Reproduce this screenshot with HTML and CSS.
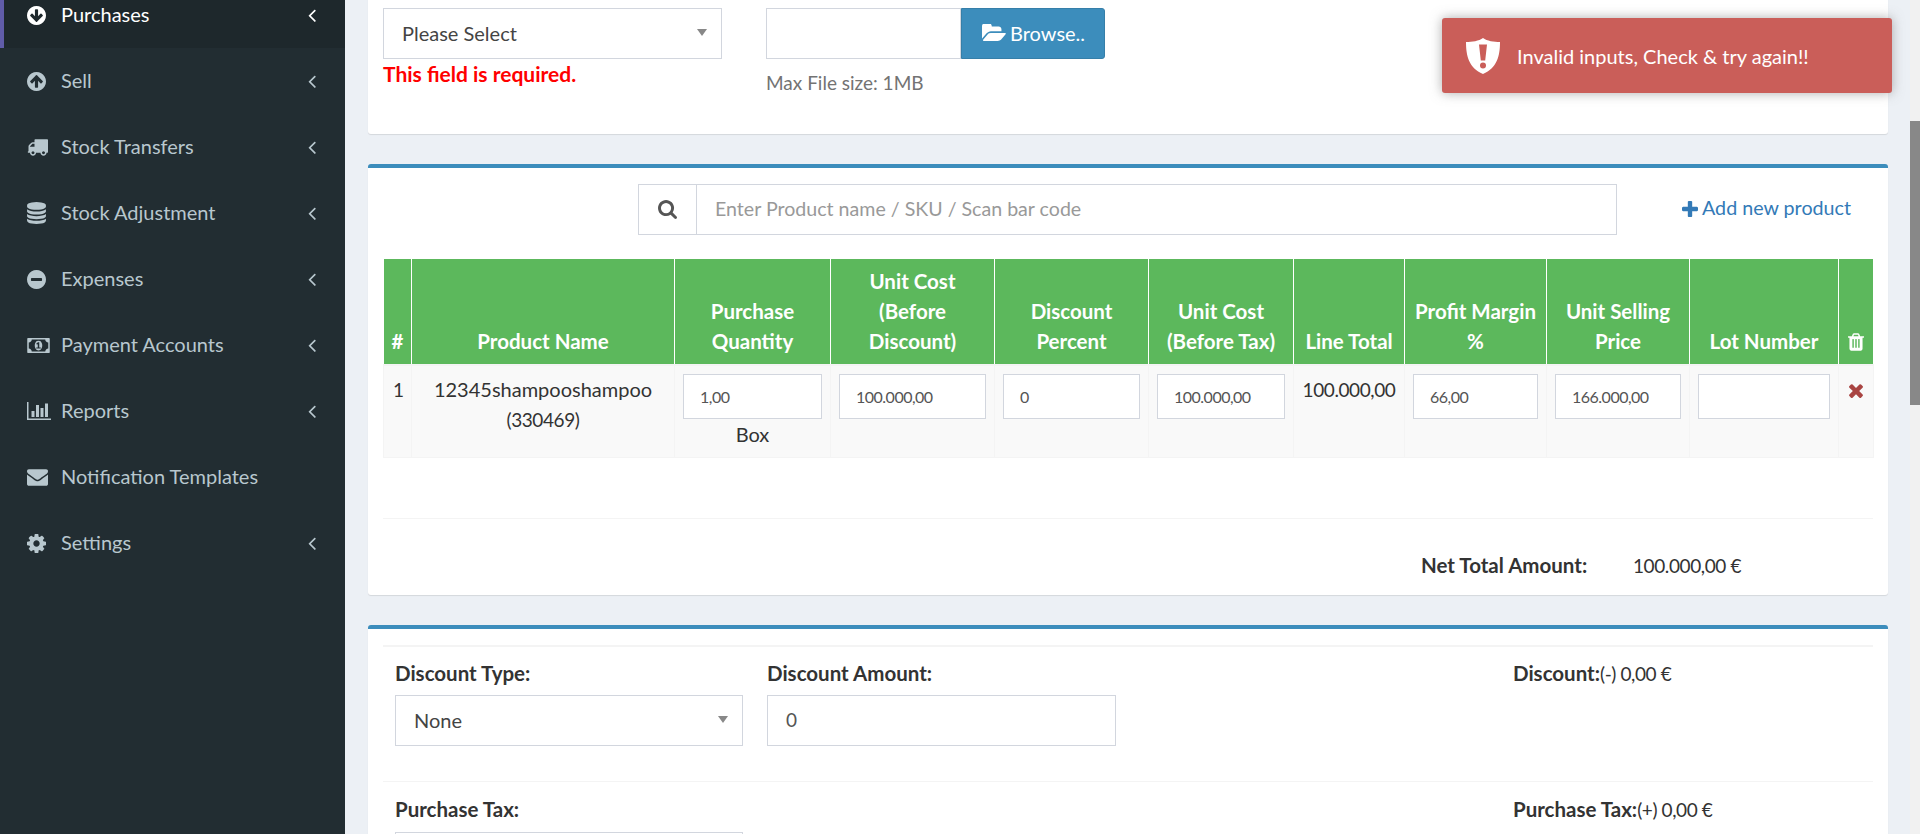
FILE: index.html
```html
<!DOCTYPE html>
<html lang="en">
<head>
  <meta charset="UTF-8" />
  <title>Add Purchase</title>
  <link rel="stylesheet" href="styles.css">
</head>
<body>
  <!-- Sidebar -->
  <aside class="sidebar">
    <ul class="menu">
      <li class="menu-item active">
        <svg class="ico ico-circle" viewBox="128 128 1536 1536"><path d="M1412 897q0-27-18-45l-91-91q-18-18-45-18t-45 18l-189 189v-502q0-26-19-45t-45-19h-128q-26 0-45 19t-19 45v502l-189-189q-19-19-45-19t-45 19l-91 91q-18 18-18 45t18 45l362 362 91 91q18 18 45 18t45-18l91-91 362-362q18-18 18-45zm252-1q0 209-103 385.500t-279.500 279.500-385.500 103-385.500-103-279.500-279.500-103-385.500 103-385.500 279.500-279.500 385.500-103 385.500 103 279.500 279.500 103 385.500z"/></svg>
        <span class="menu-label">Purchases</span>
        <svg class="chevron" viewBox="0 0 1792 1792"><path d="M1203 544q0 13-10 23l-393 393 393 393q10 10 10 23t-10 23l-50 50q-10 10-23 10t-23-10l-466-466q-10-10-10-23t10-23l466-466q10-10 23-10t23 10l50 50q10 10 10 23z"/></svg>
      </li>
      <li class="menu-item">
        <svg class="ico ico-circle" viewBox="128 128 1536 1536"><path d="M1412 895q0-27-18-45l-362-362-91-91q-18-18-45-18t-45 18l-91 91-362 362q-18 18-18 45t18 45l91 91q18 18 45 18t45-18l189-189v502q0 26 19 45t45 19h128q26 0 45-19t19-45v-502l189 189q19 19 45 19t45-19l91-91q18-18 18-45zm252 1q0 209-103 385.500t-279.500 279.500-385.500 103-385.500-103-279.500-279.500-103-385.500 103-385.500 279.500-279.500 385.500-103 385.500 103 279.500 279.500 103 385.500z"/></svg>
        <span class="menu-label">Sell</span>
        <svg class="chevron" viewBox="0 0 1792 1792"><path d="M1203 544q0 13-10 23l-393 393 393 393q10 10 10 23t-10 23l-50 50q-10 10-23 10t-23-10l-466-466q-10-10-10-23t10-23l466-466q10-10 23-10t23 10l50 50q10 10 10 23z"/></svg>
      </li>
      <li class="menu-item">
        <svg class="ico ico-truck" viewBox="0 256 1792 1408"><path d="M640 1408q0-52-38-90t-90-38-90 38-38 90 38 90 90 38 90-38 38-90zm-384-512h384v-256h-158q-13 0-22 9l-195 195q-9 9-9 22v30zm1280 512q0-52-38-90t-90-38-90 38-38 90 38 90 90 38 90-38 38-90zm256-1088v1024q0 15-4 26.500t-13.500 18.500-16.500 11.500-23.500 6-22.500 2-25.500 0-22.500-.5q0 106-75 181t-181 75-181-75-75-181h-384q0 106-75 181t-181 75-181-75-75-181h-64q-3 0-22.500.5t-25.500 0-22.500-2-23.500-6-16.500-11.500-13.500-18.500-4-26.500q0-26 19-45t45-19v-320q0-8-.5-35t0-38 2.500-34.500 6.500-37 14-30.500 22.500-30l198-198q19-19 50.500-32t58.500-13h160v-192q0-26 19-45t45-19h1024q26 0 45 19t19 45z"/></svg>
        <span class="menu-label">Stock Transfers</span>
        <svg class="chevron" viewBox="0 0 1792 1792"><path d="M1203 544q0 13-10 23l-393 393 393 393q10 10 10 23t-10 23l-50 50q-10 10-23 10t-23-10l-466-466q-10-10-10-23t10-23l466-466q10-10 23-10t23 10l50 50q10 10 10 23z"/></svg>
      </li>
      <li class="menu-item">
        <svg class="ico ico-database" viewBox="128 0 1536 1792"><path d="M896 768q237 0 443-43t325-127v170q0 69-103 128t-280 93.500-385 34.500-385-34.500-280-93.500-103-128v-170q119 84 325 127t443 43zm0 768q237 0 443-43t325-127v170q0 69-103 128t-280 93.500-385 34.500-385-34.500-280-93.500-103-128v-170q119 84 325 127t443 43zm0-384q237 0 443-43t325-127v170q0 69-103 128t-280 93.500-385 34.500-385-34.500-280-93.500-103-128v-170q119 84 325 127t443 43zm0-1152q208 0 385 34.500t280 93.500 103 128v128q0 69-103 128t-280 93.500-385 34.500-385-34.500-280-93.500-103-128v-128q0-69 103-128t280-93.500 385-34.500z"/></svg>
        <span class="menu-label">Stock Adjustment</span>
        <svg class="chevron" viewBox="0 0 1792 1792"><path d="M1203 544q0 13-10 23l-393 393 393 393q10 10 10 23t-10 23l-50 50q-10 10-23 10t-23-10l-466-466q-10-10-10-23t10-23l466-466q10-10 23-10t23 10l50 50q10 10 10 23z"/></svg>
      </li>
      <li class="menu-item">
        <svg class="ico ico-circle" viewBox="128 128 1536 1536"><path d="M1344 960v-128q0-26-19-45t-45-19h-768q-26 0-45 19t-19 45v128q0 26 19 45t45 19h768q26 0 45-19t19-45zm320-64q0 209-103 385.500t-279.500 279.500-385.500 103-385.500-103-279.500-279.500-103-385.500 103-385.500 279.500-279.500 385.500-103 385.500 103 279.500 279.500 103 385.500z"/></svg>
        <span class="menu-label">Expenses</span>
        <svg class="chevron" viewBox="0 0 1792 1792"><path d="M1203 544q0 13-10 23l-393 393 393 393q10 10 10 23t-10 23l-50 50q-10 10-23 10t-23-10l-466-466q-10-10-10-23t10-23l466-466q10-10 23-10t23 10l50 50q10 10 10 23z"/></svg>
      </li>
      <li class="menu-item">
        <svg class="ico ico-money" viewBox="0 256 1920 1280"><path d="M768 1152h384v-96h-128v-448h-114l-148 137 77 80q42-37 55-57h2v288h-128v96zm512-256q0 70-21 142t-59.500 134-101.500 101-138 39-138-39-101.500-101-59.500-134-21-142 21-142 59.500-134 101.500-101 138-39 138 39 101.500 101 59.500 134 21 142zm512 256v-512q-106 0-181-75t-75-181h-1152q0 106-75 181t-181 75v512q106 0 181 75t75 181h1152q0-106 75-181t181-75zm128-832v1152q0 26-19 45t-45 19h-1792q-26 0-45-19t-19-45v-1152q0-26 19-45t45-19h1792q26 0 45 19t19 45z"/></svg>
        <span class="menu-label">Payment Accounts</span>
        <svg class="chevron" viewBox="0 0 1792 1792"><path d="M1203 544q0 13-10 23l-393 393 393 393q10 10 10 23t-10 23l-50 50q-10 10-23 10t-23-10l-466-466q-10-10-10-23t10-23l466-466q10-10 23-10t23 10l50 50q10 10 10 23z"/></svg>
      </li>
      <li class="menu-item">
        <svg class="ico ico-chart" viewBox="0 128 2048 1536"><path d="M640 896v512h-256v-512h256zm384-512v1024h-256v-1024h256zm1024 1152v128h-2048v-1536h128v1408h1920zm-640-896v768h-256v-768h256zm384-384v1152h-256v-1152h256z"/></svg>
        <span class="menu-label">Reports</span>
        <svg class="chevron" viewBox="0 0 1792 1792"><path d="M1203 544q0 13-10 23l-393 393 393 393q10 10 10 23t-10 23l-50 50q-10 10-23 10t-23-10l-466-466q-10-10-10-23t10-23l466-466q10-10 23-10t23 10l50 50q10 10 10 23z"/></svg>
      </li>
      <li class="menu-item">
        <svg class="ico ico-truck" viewBox="0 256 1792 1408"><path d="M1792 710v794q0 66-47 113t-113 47h-1472q-66 0-113-47t-47-113v-794q44 49 101 87 362 246 497 345 57 42 92.500 65.500t94.500 48 110 24.500h2q51 0 110-24.500t94.500-48 92.500-65.500q170-123 498-345 57-39 100-87zm0-294q0 79-49 151t-122 123q-376 261-468 325-10 7-42.500 30.500t-54 38-52 32.500-57.500 27-50 9h-2q-23 0-50-9t-57.500-27-52-32.500-54-38-42.500-30.500q-91-64-262-182.500t-205-142.500q-62-42-117-115.500t-55-136.500q0-78 41.500-130t118.500-52h1472q65 0 112.500 47t47.500 113z"/></svg>
        <span class="menu-label">Notification Templates</span>
      </li>
      <li class="menu-item">
        <svg class="ico ico-circle" viewBox="128 128 1536 1536"><path d="M1152 896q0-106-75-181t-181-75-181 75-75 181 75 181 181 75 181-75 75-181zm512-109v222q0 12-8 23t-20 13l-185 28q-19 54-39 91 35 50 107 138 10 12 10 25t-9 23q-27 37-99 108t-94 71q-12 0-26-9l-138-108q-44 23-91 38-16 136-29 186-7 28-36 28h-222q-14 0-24.500-8.500t-11.500-21.500l-28-184q-49-16-90-37l-141 107q-10 9-25 9-14 0-25-11-126-114-165-168-7-10-7-23 0-12 8-23 15-21 51-66.500t54-70.500q-27-50-41-99l-183-27q-13-2-21-12.500t-8-23.500v-222q0-12 8-23t19-13l186-28q14-46 39-92-40-57-107-138-10-12-10-24 0-10 9-23 26-36 98.500-107.500t94.500-71.500q13 0 26 10l138 107q44-23 91-38 16-136 29-186 7-28 36-28h222q14 0 24.500 8.500t11.500 21.500l28 184q49 16 90 37l142-107q9-9 24-9 13 0 25 10 129 119 165 170 7 8 7 22 0 12-8 23-15 21-51 66.500t-54 70.500q26 50 41 98l183 28q13 2 21 12.500t8 23.500z"/></svg>
        <span class="menu-label">Settings</span>
        <svg class="chevron" viewBox="0 0 1792 1792"><path d="M1203 544q0 13-10 23l-393 393 393 393q10 10 10 23t-10 23l-50 50q-10 10-23 10t-23-10l-466-466q-10-10-10-23t10-23l466-466q10-10 23-10t23 10l50 50q10 10 10 23z"/></svg>
      </li>
    </ul>
  </aside>

  <main class="content">
    <!-- Supplier + document -->
    <section class="box box-plain">
      <div class="doc-row">
        <div class="doc-col">
          <div class="select"><span>Please Select</span><i class="caret"></i></div>
          <div class="error">This field is required.</div>
        </div>
        <div class="file-col">
          <div class="file-group">
            <div class="file-name"></div>
            <div class="file-btn">
              <svg class="ico-folder" viewBox="0 192 1944 1344"><path d="M1943 952q0 31-31 66l-336 396q-43 51-120.500 86.500t-143.500 35.500h-1088q-34 0-60.500-13t-26.500-43q0-31 31-66l336-396q43-51 120.500-86.500t143.500-35.500h1088q34 0 60.500 13t26.500 43zm-343-344v160h-832q-94 0-197 47.500t-164 119.500l-337 396-5 6q0-4-.5-12.500t-.500-12.500v-960q0-92 66-158t158-66h320q92 0 158 66t66 158v32h544q92 0 158 66t66 158z"/></svg>
              Browse..
            </div>
          </div>
          <div class="help">Max File size: 1MB</div>
        </div>
      </div>
    </section>

    <!-- Products -->
    <section class="box">
      <div class="search-row">
        <div class="search-group">
          <span class="search-addon">
            <svg class="ico-search" viewBox="64 128 1664 1664"><path d="M1216 832q0-185-131.500-316.500t-316.500-131.500-316.500 131.500-131.500 316.500 131.500 316.500 316.500 131.500 316.500-131.500 131.500-316.500zm512 832q0 52-38 90t-90 38q-54 0-90-38l-343-342q-179 124-399 124-143 0-273.500-55.500t-225-150-150-225-55.500-273.500 55.500-273.500 150-225 225-150 273.500-55.500 273.500 55.500 225 150 150 225 55.500 273.500q0 220-124 399l343 343q37 37 37 90z"/></svg>
          </span>
          <span class="search-input">Enter Product name / SKU / Scan bar code</span>
        </div>
        <a class="add-link">
          <svg class="ico-plus" viewBox="192 128 1408 1408"><path d="M1600 736v192q0 40-28 68t-68 28h-416v416q0 40-28 68t-68 28h-192q-40 0-68-28t-28-68v-416h-416q-40 0-68-28t-28-68v-192q0-40 28-68t68-28h416v-416q0-40 28-68t68-28h192q40 0 68 28t28 68v416h416q40 0 68 28t28 68z"/></svg>
          Add new product
        </a>
      </div>

      <table class="product-table">
        <colgroup>
          <col class="c-num"><col class="c-name"><col class="c-qty"><col class="c-cost"><col class="c-disc">
          <col class="c-tax"><col class="c-total"><col class="c-margin"><col class="c-sell"><col class="c-lot"><col class="c-del">
        </colgroup>
        <thead>
          <tr>
            <th>#</th>
            <th>Product Name</th>
            <th>Purchase Quantity</th>
            <th>Unit Cost (Before Discount)</th>
            <th>Discount Percent</th>
            <th>Unit Cost (Before Tax)</th>
            <th>Line Total</th>
            <th>Profit Margin %</th>
            <th>Unit Selling Price</th>
            <th>Lot Number</th>
            <th><svg class="ico-trash" viewBox="192 128 1408 1536"><path d="M704 1376v-704q0-14-9-23t-23-9h-64q-14 0-23 9t-9 23v704q0 14 9 23t23 9h64q14 0 23-9t9-23zm256 0v-704q0-14-9-23t-23-9h-64q-14 0-23 9t-9 23v704q0 14 9 23t23 9h64q14 0 23-9t9-23zm256 0v-704q0-14-9-23t-23-9h-64q-14 0-23 9t-9 23v704q0 14 9 23t23 9h64q14 0 23-9t9-23zm-544-992h448l-48-117q-7-9-17-11h-317q-10 2-17 11zm928 32v64q0 14-9 23t-23 9h-96v948q0 83-47 143.500t-113 60.500h-832q-66 0-113-58.500t-47-141.500v-952h-96q-14 0-23-9t-9-23v-64q0-14 9-23t23-9h309l70-167q15-37 54-63t79-26h320q40 0 79 26t54 63l70 167h309q14 0 23 9t9 23z"/></svg></th>
          </tr>
        </thead>
        <tbody>
          <tr>
            <td><span class="num">1</span></td>
            <td class="center">12345shampooshampoo<br><span class="num">(330469)</span></td>
            <td class="center"><div class="cell-input">1,00</div>Box</td>
            <td><div class="cell-input">100.000,00</div></td>
            <td><div class="cell-input">0</div></td>
            <td><div class="cell-input">100.000,00</div></td>
            <td class="center"><span class="num">100.000,00</span></td>
            <td><div class="cell-input">66,00</div></td>
            <td><div class="cell-input">166.000,00</div></td>
            <td><div class="cell-input"></div></td>
            <td class="center"><svg class="ico-times" viewBox="302 354 1188 1200"><path d="M1490 1322q0 40-28 68l-136 136q-28 28-68 28t-68-28l-294-294-294 294q-28 28-68 28t-68-28l-136-136q-28-28-28-68t28-68l294-294-294-294q-28-28-28-68t28-68l136-136q28-28 68-28t68 28l294 294 294-294q28-28 68-28t68 28l136 136q28 28 28 68t-28 68l-294 294 294 294q28 28 28 68z"/></svg></td>
          </tr>
        </tbody>
      </table>

      <hr class="divider">
      <div class="net-total">
        <strong class="net-label">Net Total Amount:</strong>
        <span class="num">100.000,00 €</span>
      </div>
    </section>

    <!-- Discount + tax -->
    <section class="box">
      <div class="calc-row calc-first">
        <div>
          <label class="field-label">Discount Type:</label>
          <div class="select"><span>None</span><i class="caret"></i></div>
        </div>
        <div>
          <label class="field-label">Discount Amount:</label>
          <div class="text-input">0</div>
        </div>
        <div class="calc-result"><strong>Discount:</strong><span class="num">(-) 0,00 €</span></div>
      </div>
      <div class="calc-row calc-second">
        <div>
          <label class="field-label">Purchase Tax:</label>
          <div class="select"></div>
        </div>
        <div></div>
        <div class="calc-result"><strong>Purchase Tax:</strong><span class="num">(+) 0,00 €</span></div>
      </div>
    </section>
  </main>

  <div class="scrollbar"><div class="scroll-thumb"></div></div>

  <!-- Toast -->
  <div class="toast">
    <svg class="ico-shield" viewBox="0 0 34 36"><path fill-rule="evenodd" d="M17 0 C21 3 28 4 34 4 C34 18 31 30 17 36 C3 30 0 18 0 4 C6 4 13 3 17 0 Z M13 6.500 L21 6.500 L19.200 22.500 L14.800 22.500 Z M17 24.500 A3 3 0 1 0 17 30.500 A3 3 0 1 0 17 24.500 Z"/></svg>
    <span>Invalid inputs, Check &amp; try again!!</span>
  </div>
</body>
</html>
```

FILE: styles.css
```css
/* Global styles */
* {
  box-sizing: border-box;
}
html,
body {
  height: 100%;
}
body {
  margin: 0;
  display: grid;
  grid-template-columns: 345px 1fr 10px;
  height: 834px;
  overflow: hidden;
  background: #ecf0f5;
  color: #333;
  font-family: "Lato", "Open Sans", sans-serif;
  font-size: 20px;
  line-height: 30px;
}
strong,
.field-label {
  font-size: 20.5px;
  line-height: 1;
  font-weight: bold;
}
.num {
  font-size: 19px;
  line-height: 1;
  letter-spacing: -0.4px;
}

/* Sidebar */
.sidebar {
  background: #222d32;
  overflow: hidden;
}
.menu {
  list-style: none;
  margin: -18px 0 0;
  padding: 0;
}
.menu-item {
  display: flex;
  align-items: center;
  height: 66px;
  padding-left: 27px;
  color: #b8c7ce;
  fill: #b8c7ce;
}
.menu-item.active {
  background: #1e282c;
  border-left: 4px solid #605ca8;
  padding-left: 23px;
  color: #fff;
  fill: #fff;
}
.menu-label {
  margin-bottom: 2px;
}
.ico {
  flex: none;
  margin-right: 13px;
}
.ico-circle {
  width: 19px;
  height: 19px;
  margin-right: 15px;
}
.ico-truck {
  width: 21px;
  height: 17px;
}
.ico-database {
  width: 19px;
  height: 22px;
  margin-right: 15px;
}
.ico-money {
  width: 23px;
  height: 15px;
  margin-right: 11px;
}
.ico-chart {
  width: 24px;
  height: 18px;
  margin-right: 10px;
}
.chevron {
  width: 22px;
  height: 22px;
  margin-left: auto;
  margin-right: 22px;
}

/* Main column */
.content {
  padding: 0 22px 0 23px;
  overflow: hidden;
}
.box {
  background: #fff;
  border-top: 4px solid #3c8dbc;
  border-radius: 3px;
  box-shadow: 0 1px 1px rgba(0,0,0,0.1);
  margin-bottom: 30px;
}
.box-plain {
  border-top: 0;
  margin-top: -20px;
  padding: 28px 15px 36px;
}

/* Form bits */
.select,
.text-input,
.search-input,
.file-name {
  height: 51px;
  border: 1px solid #d2d6de;
  background: #fff;
  color: #444;
  display: flex;
  align-items: center;
  padding: 0 0 2px 18px;
}
.caret {
  width: 0;
  height: 0;
  margin-left: auto;
  margin-right: 14px;
  border-left: 5px solid transparent;
  border-right: 5px solid transparent;
  border-top: 7px solid #888;
}
.text-input {
  color: #555;
  font-size: 19px;
}
.doc-row {
  display: flex;
  gap: 44px;
}
.doc-col {
  width: 339px;
}
.error {
  color: #f00;
  font-size: 21px;
  font-weight: bold;
}
.file-group {
  display: flex;
  width: 339px;
}
.file-name {
  width: 195px;
}
.file-btn {
  display: flex;
  align-items: center;
  gap: 4px;
  width: 144px;
  height: 51px;
  padding: 0 0 2px 19px;
  background: #3c8dbc;
  border: 1px solid #367fa9;
  border-radius: 0 3px 3px 0;
  color: #fff;
  fill: #fff;
}
.ico-folder {
  width: 25px;
  height: 17px;
}
.help {
  margin-top: 9px;
  color: #737373;
  font-size: 19px;
}

/* Product search */
.search-row {
  display: flex;
  align-items: center;
  padding: 16px 0 0 270px;
}
.search-group {
  display: flex;
  width: 979px;
}
.search-addon {
  display: flex;
  align-items: center;
  justify-content: center;
  width: 58px;
  height: 51px;
  border: 1px solid #d2d6de;
  border-right: 0;
  fill: #555;
}
.ico-search {
  width: 19px;
  height: 19px;
}
.search-input {
  flex: 1;
  color: #999;
  font-size: 19.6px;
}
.add-link {
  display: flex;
  align-items: center;
  gap: 4px;
  margin-left: 65px;
  padding-bottom: 4px;
  color: #337ab7;
  fill: #337ab7;
  font-size: 19.7px;
}
.ico-plus {
  width: 16px;
  height: 16px;
  margin-top: 2px;
}

/* Product table */
.product-table {
  table-layout: fixed;
  border-collapse: collapse;
  width: 1490px;
  margin: 23px 15px 0;
}
.c-num { width: 28px; }
.c-name { width: 263px; }
.c-qty { width: 156px; }
.c-cost { width: 164px; }
.c-disc { width: 154px; }
.c-tax { width: 145px; }
.c-total { width: 111px; }
.c-margin { width: 142px; }
.c-sell { width: 143px; }
.c-lot { width: 149px; }
.c-del { width: 35px; }
.product-table th {
  background: #5cb85c;
  color: #fff;
  fill: #fff;
  border: 1px solid #fff;
  border-bottom: 2px solid #f4f4f4;
  padding: 7px 8px 8px;
  text-align: center;
  vertical-align: bottom;
  font-size: 20.5px;
}
.product-table th:first-child,
.product-table th:last-child {
  padding-left: 0;
  padding-right: 0;
}
.product-table td {
  background: #f9f9f9;
  border: 1px solid #f4f4f4;
  padding: 8px;
  vertical-align: top;
  text-align: left;
}
.product-table td.center {
  text-align: center;
}
.product-table td:first-child {
  padding-left: 9px;
  padding-right: 0;
}
.product-table td:last-child {
  padding-left: 0;
  padding-right: 0;
}
.cell-input {
  height: 45px;
  padding-left: 16px;
  border: 1px solid #d2d6de;
  background: #fff;
  color: #555;
  font-size: 16px;
  letter-spacing: -0.5px;
  line-height: 43px;
  text-align: left;
}
.ico-trash {
  width: 16px;
  height: 18px;
  vertical-align: -2px;
}
.ico-times {
  width: 14px;
  height: 14px;
  fill: #a94442;
  vertical-align: -1px;
}
.divider {
  border: 0;
  border-top: 1px solid #f4f4f4;
  margin: 60px 15px 0;
}
.net-total {
  display: flex;
  align-items: center;
  height: 76px;
  padding: 16px 0 0 1053px;
}
.net-label {
  width: 212px;
}

/* Discount and tax rows */
.calc-row {
  display: grid;
  grid-template-columns: 348px 349px 1fr;
  column-gap: 24px;
  margin: 0 15px;
  padding: 12px 12px 35px;
  border-top: 1px solid #f4f4f4;
}
.calc-first {
  margin-top: 16px;
  border-top-width: 2px;
  padding-top: 11px;
}
.field-label {
  display: flex;
  align-items: center;
  height: 30px;
  margin-bottom: 7px;
}
.calc-second .field-label {
  margin-bottom: 8px;
}
.calc-result {
  padding-left: 373px;
}

/* Scrollbar */
.scrollbar {
  background: #f1f1f1;
}
.scroll-thumb {
  margin-top: 121px;
  height: 284px;
  background: #888;
}

/* Toast */
.toast {
  position: absolute;
  top: 18px;
  right: 28px;
  display: flex;
  align-items: center;
  gap: 17px;
  width: 450px;
  height: 75px;
  padding-left: 24px;
  background: #ca5e59;
  border-radius: 3px;
  box-shadow: 0 0 12px rgba(153,153,153,0.8);
  color: #fff;
  fill: #fff;
}
.ico-shield {
  width: 34px;
  height: 36px;
}
```
